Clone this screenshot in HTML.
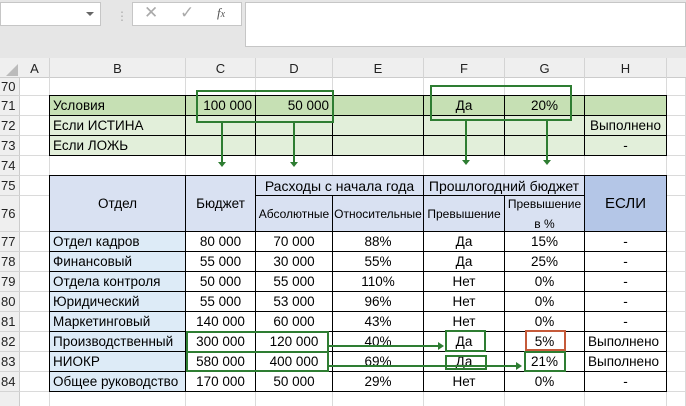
<!DOCTYPE html><html><head><meta charset="utf-8"><style>
body{margin:0;width:686px;height:406px;overflow:hidden;background:#fff;font-family:"Liberation Sans",sans-serif;font-size:13.5px;position:relative}
.a{position:absolute;box-sizing:border-box}
.c{position:absolute;box-sizing:border-box;display:flex;align-items:center;justify-content:center;white-space:nowrap;color:#000}
.l{justify-content:flex-start;padding-left:3px}.r{justify-content:flex-end;padding-right:3px}
.hd{color:#222;font-size:13px}
</style></head><body>
<div class="a" style="left:0;top:0;width:686px;height:58px;background:#e6e6e6"></div>
<div class="a" style="left:0;top:2px;width:101px;height:24px;background:#fff;border:1px solid #c6c6c6"></div>
<div class="a" style="left:86px;top:12px;border-left:4px solid transparent;border-right:4px solid transparent;border-top:4px solid #666"></div>
<div class="a" style="left:116px;top:9px;color:#aaa;font-size:12px">⋮</div>
<div class="a" style="left:132px;top:2px;width:110px;height:24px;background:#fff;border:1px solid #c6c6c6"></div>
<div class="a" style="left:144px;top:3px;color:#aaa;font-size:17px">✕</div>
<div class="a" style="left:180px;top:3px;color:#aaa;font-size:17px">✓</div>
<div class="a" style="left:217px;top:5px;color:#555;font-size:13px;font-style:italic;font-family:'Liberation Serif',serif">f<span style="font-size:10px">x</span></div>
<div class="a" style="left:245px;top:2px;width:441px;height:45px;background:#fff;border:1px solid #c6c6c6"></div>
<div class="a" style="left:0;top:58px;width:686px;height:20px;background:#efefef;border-bottom:1px solid #ccc"></div>
<div class="a" style="left:0;top:78px;width:20px;height:328px;background:#efefef;border-right:1px solid #ccc"></div>
<div class="a" style="left:6px;top:64px;border-left:12px solid transparent;border-bottom:12px solid #bbb"></div>
<div id="g"></div>
<script>
var X=[20,50,186,256,333,424,505,585,667,686],L="ABCDEFGH";
var Y=[78,96,116,136,156,176,196,232,252,272,292,312,332,352,372,392,412];
var h='';
for(var i=0;i<8;i++)h+='<div class="c hd" style="left:'+X[i]+'px;top:58px;width:'+(X[i+1]-X[i])+'px;height:20px;border-right:1px solid #d4d4d4">'+L[i]+'</div>';
for(var i=0;i<15;i++)h+='<div class="c hd l" style="left:0;top:'+Y[i]+'px;width:20px;height:'+(Y[i+1]-Y[i])+'px;padding-left:1px;border-bottom:1px solid #d4d4d4">'+(70+i)+'</div>';
for(var i=1;i<10;i++)h+='<div class="a" style="left:'+(X[i]-1)+'px;top:78px;width:1px;height:328px;background:#dadada"></div>';
for(var i=1;i<16;i++)h+='<div class="a" style="left:20px;top:'+(Y[i]-1)+'px;width:666px;height:1px;background:#dadada"></div>';
function cell(c1,c2,r1,r2,t,bg,cls,st){var x=X[c1],y=Y[r1];h+='<div class="c '+(cls||'')+'" style="left:'+(x-1)+'px;top:'+(y-1)+'px;width:'+(X[c2+1]-x+1)+'px;height:'+(Y[r2+1]-y+1)+'px;border:1px solid #000;background:'+bg+';'+(st||'')+'">'+t+'</div>';}
var G1='#c6e0b4',G2='#e2efda';
cell(1,1,1,1,'Условия',G1,'l');cell(2,2,1,1,'100 000',G1,'r');cell(3,3,1,1,'50 000',G1,'r');cell(4,4,1,1,'',G1);cell(5,5,1,1,'Да',G1);cell(6,6,1,1,'20%',G1);cell(7,7,1,1,'',G1);
var r2=['Если ИСТИНА','','','','','','Выполнено'],r3=['Если ЛОЖЬ','','','','','','-'];
for(var c=1;c<8;c++){cell(c,c,2,2,r2[c-1],G2,c==1?'l':'');cell(c,c,3,3,r3[c-1],G2,c==1?'l':'');}
var B='#d9e1f2';
cell(1,1,5,6,'Отдел',B);cell(2,2,5,6,'Бюджет',B);cell(3,4,5,5,'Расходы с начала года',B,'','font-size:14px');cell(5,6,5,5,'Прошлогодний бюджет',B,'','font-size:14px');cell(7,7,5,6,'ЕСЛИ','#b4c6e7','','font-size:15px');
cell(3,3,6,6,'Абсолютные',B,'','font-size:12px');cell(4,4,6,6,'Относительные',B,'','font-size:12px');cell(5,5,6,6,'Превышение',B,'','font-size:12px');cell(6,6,6,6,'Превышение<br>в %',B,'','font-size:12px;text-align:center;line-height:20px');
var D=[['Отдел кадров','80 000','70 000','88%','Да','15%','-'],['Финансовый','55 000','30 000','55%','Да','25%','-'],['Отдела контроля','50 000','55 000','110%','Нет','0%','-'],['Юридический','55 000','53 000','96%','Нет','0%','-'],['Маркетинговый','140 000','60 000','43%','Нет','0%','-'],['Производственный','300 000','120 000','40%','Да','5%','Выполнено'],['НИОКР','580 000','400 000','69%','Да','21%','Выполнено'],['Общее руководство','170 000','50 000','29%','Нет','0%','-']];
for(var r=0;r<8;r++)for(var c=0;c<7;c++)cell(c+1,c+1,7+r,7+r,D[r][c],c==0?'#ddebf7':'#fff',c==0||c==6&&D[r][c]!='-'?'l':'');
document.getElementById('g').innerHTML=h;
</script>
<svg class="a" style="left:0;top:0" width="686" height="406">
<g fill="none" stroke="#2e7d32" stroke-width="2">
<rect x="197" y="91" width="136" height="31"/>
<rect x="431" y="86" width="140" height="34"/>
<rect x="187" y="332" width="141" height="20"/><rect x="187" y="352" width="141" height="19"/>
<rect x="446" y="331" width="39" height="20"/><rect x="446" y="356" width="40" height="13"/>
<rect x="525" y="352" width="40" height="19"/>
<line x1="222" y1="122" x2="222" y2="162"/><line x1="294" y1="122" x2="294" y2="162"/>
<line x1="466" y1="120" x2="466" y2="160"/><line x1="547" y1="120" x2="547" y2="160"/>
<line x1="328" y1="346" x2="438" y2="346"/><line x1="328" y1="366" x2="516" y2="366"/>
</g>
<rect x="526" y="331" width="39" height="19" fill="none" stroke="#c55a3a" stroke-width="2"/>
<g fill="#2e7d32"><path d="M218 162h8l-4 5z"/><path d="M290 162h8l-4 5z"/><path d="M462 160h8l-4 5z"/><path d="M543 160h8l-4 5z"/><path d="M438 342v8l6-4z"/><path d="M516 362v8l6-4z"/></g>
</svg>
</body></html>
